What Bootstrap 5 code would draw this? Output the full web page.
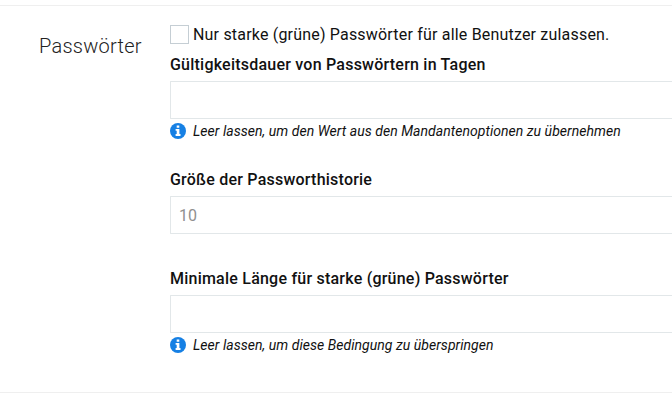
<!DOCTYPE html>
<html lang="de">
<head>
<meta charset="utf-8">
<meta name="viewport" content="width=device-width, initial-scale=1">
<title>Passwörter</title>
<link href="https://cdn.jsdelivr.net/npm/bootstrap@5.3.0/dist/css/bootstrap.min.css" rel="stylesheet">
<style>
body{font-family:Roboto,"Liberation Sans",sans-serif;font-size:16px;color:#111;background:#fff}
.settings-section{margin-top:5px;height:388px;border-top:1px solid #efefef;border-bottom:1px solid #efefef}
.section-name{width:170px;flex:none;padding:25px 0 0 39px;font-size:20px;font-weight:300;line-height:30px;letter-spacing:.25px;color:#222}
.section-fields{padding-top:17px;min-width:0}
.form-check.pw-check{height:23px;min-height:0}
.pw-check .form-check-input{width:19px;height:19px;border:1px solid #c5ced4;border-radius:0}
.pw-check .form-check-label{line-height:23px;letter-spacing:.19px}
.form-label{display:block;line-height:24px;font-weight:500;letter-spacing:.225px}
.form-control{height:38px;border-color:#e2e7e9;border-right:0;border-radius:1px 0 0 1px;padding:6px 8px}
.form-control::placeholder{color:#909090;opacity:1}
.hint{font-size:14px;font-style:italic;line-height:24px;height:24px;letter-spacing:.04px}
.hint svg{margin-right:7px}
.field-1{height:122px;padding-top:7px}
.field-2{height:99px}
</style>
</head>
<body>
<section class="settings-section d-flex">
  <h2 class="section-name m-0">Passwörter</h2>
  <form class="section-fields flex-fill">
    <div class="form-check pw-check d-flex align-items-center p-0 m-0">
      <input class="form-check-input m-0 me-1 float-none flex-shrink-0" type="checkbox" id="strong">
      <label class="form-check-label" for="strong">Nur starke (grüne) Passwörter für alle Benutzer zulassen.</label>
    </div>
    <div class="field-1">
      <label class="form-label mb-1" for="days">Gültigkeitsdauer von Passwörtern in Tagen</label>
      <input class="form-control" id="days" type="text">
      <div class="hint d-flex align-items-center">
        <svg width="16" height="16" viewBox="0 0 16 16"><circle cx="8" cy="8" r="8" fill="#1680e4"/><path fill="#fff" d="M6.7 2.6h2.6v2.1H6.7zM5.6 6h3.8v5h1.1v1.9H5.6V11h1.1V7.8H5.6z"/></svg>
        <span>Leer lassen, um den Wert aus den Mandantenoptionen zu übernehmen</span>
      </div>
    </div>
    <div class="field-2">
      <label class="form-label mb-1" for="history">Größe der Passworthistorie</label>
      <input class="form-control" id="history" type="text" placeholder="10">
    </div>
    <div>
      <label class="form-label mb-1" for="minlen">Minimale Länge für starke (grüne) Passwörter</label>
      <input class="form-control" id="minlen" type="text">
      <div class="hint d-flex align-items-center">
        <svg width="16" height="16" viewBox="0 0 16 16"><circle cx="8" cy="8" r="8" fill="#1680e4"/><path fill="#fff" d="M6.7 2.6h2.6v2.1H6.7zM5.6 6h3.8v5h1.1v1.9H5.6V11h1.1V7.8H5.6z"/></svg>
        <span>Leer lassen, um diese Bedingung zu überspringen</span>
      </div>
    </div>
  </form>
</section>
<script src="https://cdn.jsdelivr.net/npm/bootstrap@5.3.0/dist/js/bootstrap.bundle.min.js"></script>
</body>
</html>
